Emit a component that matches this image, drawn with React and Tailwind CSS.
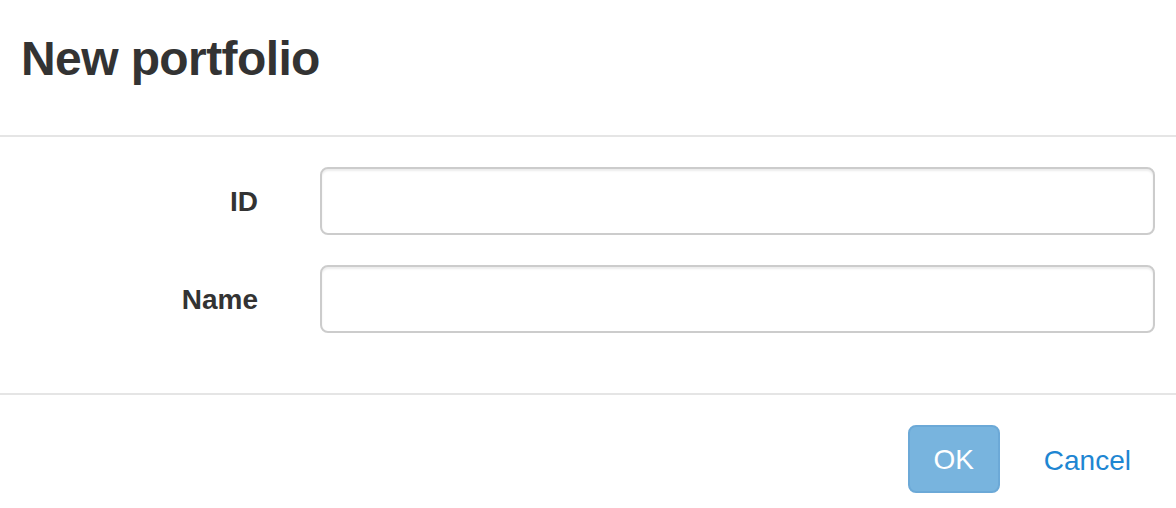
import React from 'react';

function Field({ label }) {
  return (
    <div className="flex items-center">
      <label className="w-[258px] shrink-0 text-right text-[28px] leading-[28px] font-bold text-[#333] pt-[2px]">
        {label}
      </label>
      <input
        type="text"
        className="ml-[62px] flex-1 h-[68px] rounded-[8px] border-2 border-[#cccccc] bg-white px-[24px] text-[28px] text-[#555] shadow-[inset_0_2px_2px_rgba(0,0,0,0.075)] outline-none"
      />
    </div>
  );
}

export default function App() {
  return (
    <div className="w-[1176px] h-[508px] bg-white overflow-hidden" style={{ fontFamily: '"Liberation Sans", Arial, sans-serif' }}>
      {/* Header */}
      <div className="h-[137px] border-b-2 border-[#e5e5e5] pl-[21px] pt-[35px]">
        <h4 className="text-[48px] leading-[48px] font-bold tracking-[-0.6px] text-[#333]">New portfolio</h4>
      </div>

      {/* Body */}
      <div className="pt-[30px] pb-[60px] pr-[21px] flex flex-col gap-[30px]">
        <Field label="ID" />
        <Field label="Name" />
      </div>

      {/* Footer */}
      <div className="border-t-2 border-[#e5e5e5] pt-[30px] pr-[21px] flex justify-end items-center gap-[20px]">
        <button className="w-[92px] h-[68px] rounded-[8px] border-2 border-[#6ca9d7] bg-[#78b4de] text-white text-[28px] leading-none pt-[2px]">
          OK
        </button>
        <button className="h-[68px] px-[24px] pt-[4px] text-[28px] leading-none text-[#1e86d2]">
          Cancel
        </button>
      </div>
    </div>
  );
}
